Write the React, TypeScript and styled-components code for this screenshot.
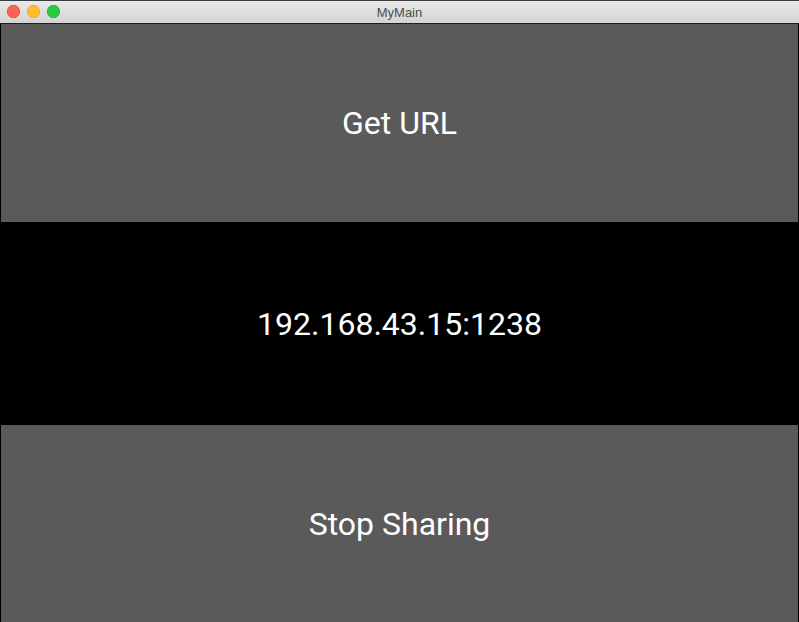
import React from 'react';
import styled, { createGlobalStyle } from 'styled-components';

const GlobalStyle = createGlobalStyle`
  html, body {
    margin: 0;
    padding: 0;
    background: #000;
  }
  #root {
    height: 622px;
  }
`;

const Window = styled.div`
  width: 799px;
  height: 622px;
  display: flex;
  flex-direction: column;
  background: #000;
  overflow: hidden;
`;

const TitleBar = styled.div`
  position: relative;
  height: 24px;
  flex-shrink: 0;
  display: flex;
  align-items: center;
  justify-content: center;
  background: linear-gradient(#e9e9e9, #d3d3d3);
  border-top: 1px solid #3a3a3a;
  border-bottom: 1px solid #1e1e1e;
  box-sizing: border-box;
`;

const Lights = styled.div`
  position: absolute;
  left: 7px;
  top: 4px;
  display: flex;
  gap: 7px;
`;

const Light = styled.span<{ $color: string; $edge: string }>`
  width: 13px;
  height: 13px;
  border-radius: 50%;
  background: ${p => p.$color};
  box-shadow: inset 0 0 0 0.5px ${p => p.$edge};
`;

const Title = styled.div`
  font-family: 'Liberation Sans', 'DejaVu Sans', sans-serif;
  font-size: 13px;
  color: #4d4d4d;
`;

const Content = styled.div`
  flex: 1;
  display: flex;
  flex-direction: column;
  border-left: 1px solid #000;
  border-right: 1px solid #000;
`;

const Panel = styled.div<{ $button?: boolean }>`
  flex: 1;
  display: flex;
  align-items: center;
  justify-content: center;
  background: ${p => (p.$button ? '#5a5a5a' : '#000')};
  color: #fff;
  font-family: Roboto, 'Noto Sans', sans-serif;
  font-size: 32px;
  padding-top: 1px;
  cursor: ${p => (p.$button ? 'pointer' : 'default')};
`;

const Middle = styled(Panel)`
  flex: 0 0 202px;
`;

export default function App() {
  return (
    <Window>
      <GlobalStyle />
      <TitleBar>
        <Lights>
          <Light $color="#fe5f57" $edge="#e0443e" />
          <Light $color="#febc2e" $edge="#dea123" />
          <Light $color="#28c840" $edge="#1aab29" />
        </Lights>
        <Title>MyMain</Title>
      </TitleBar>
      <Content>
        <Panel $button>Get URL</Panel>
        <Middle>192.168.43.15:1238</Middle>
        <Panel $button>Stop Sharing</Panel>
      </Content>
    </Window>
  );
}
